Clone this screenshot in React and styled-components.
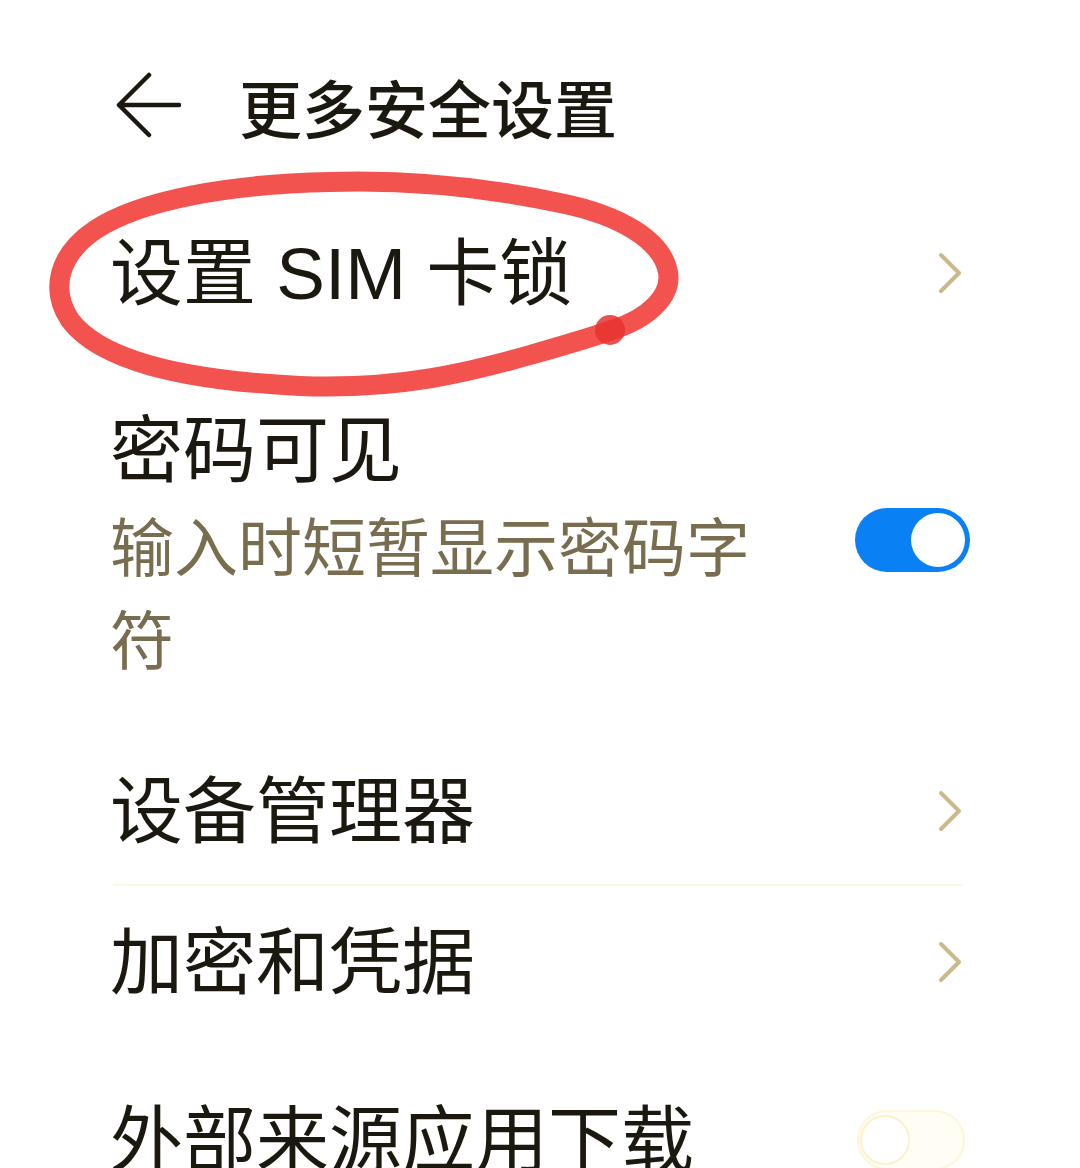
import React from 'react'
import styled, { createGlobalStyle } from 'styled-components'

const Global = createGlobalStyle`
  html, body {
    margin: 0;
    padding: 0;
    background: #fff;
  }
  body {
    font-family: "Noto Sans CJK SC", "Noto Sans", sans-serif;
    color: #1b1810;
  }
`

const Screen = styled.div`
  position: relative;
  width: 1080px;
  height: 1168px;
  overflow: hidden;
  background: #fff;
`

const Header = styled.header`
  display: flex;
  align-items: center;
  height: 210px;
  padding-left: 115px;
  gap: 58px;
`

const Title = styled.h1`
  margin: 0;
  font-size: 63px;
  font-weight: 500;
  line-height: 1;
  color: #1b1810;
`

const List = styled.div`
  display: flex;
  flex-direction: column;
  padding: 5px 110px 0 110px;
`

const Row = styled.div`
  display: flex;
  align-items: center;
  justify-content: space-between;
  height: ${p => p.h}px;
`

const TallRow = styled.div`
  display: flex;
  align-items: center;
  justify-content: space-between;
  padding: 73px 0 55px;
`

const TextBlock = styled.div`
  display: flex;
  flex-direction: column;
  max-width: 680px;
`

// Latin glyphs (SIM) come from Liberation Sans, CJK falls back to Noto
const Label = styled.div`
  font-family: "Liberation Sans", "Noto Sans CJK SC", sans-serif;
  font-size: 73px;
  line-height: 93px;
  font-weight: 400;
  color: #1b1810;
  white-space: nowrap;
`

const Sub = styled.div`
  font-size: 64px;
  line-height: 93px;
  color: #786e4f;
`

const Divider = styled.div`
  height: 2px;
  background: #fbf8e2;
  margin: 0 8px 0 3px;
`

const Chevron = styled.svg`
  width: 26px;
  height: 44px;
  margin-right: 7px;
  flex-shrink: 0;
`

const Toggle = styled.div`
  display: flex;
  align-items: center;
  justify-content: ${p => (p.on ? 'flex-end' : 'flex-start')};
  box-sizing: border-box;
  width: ${p => (p.on ? 115 : 108)}px;
  height: ${p => (p.on ? 64 : 60)}px;
  padding: 0 5px;
  border-radius: 32px;
  margin-top: ${p => p.offset || 0}px;
  margin-right: ${p => (p.on ? 0 : 5)}px;
  background: ${p => (p.on ? '#0a80f5' : '#fffdf4')};
  border: ${p => (p.on ? 'none' : '2px solid #fcf6da')};
  flex-shrink: 0;
`

const Knob = styled.div`
  width: ${p => (p.on ? 54 : 50)}px;
  height: ${p => (p.on ? 54 : 50)}px;
  border-radius: 50%;
  background: #fff;
  box-sizing: border-box;
  border: ${p => (p.on ? 'none' : '2px solid #fbf2cc')};
  margin-left: ${p => (p.on ? 0 : -4)}px;
`

const Mark = styled.svg`
  position: absolute;
  top: 0;
  left: 0;
  width: 1080px;
  height: 1168px;
  pointer-events: none;
`

const BackArrow = () => (
  <svg width="66" height="66" viewBox="0 0 66 66" fill="none">
    <path d="M4 33H64M34 3L4 33L34 63" stroke="#1b1810" strokeWidth="4.5" strokeLinecap="round" strokeLinejoin="round" />
  </svg>
)

const Arrow = () => (
  <Chevron viewBox="0 0 26 44" fill="none">
    <path d="M4 4L22 22L4 40" stroke="#c9b98c" strokeWidth="4" strokeLinecap="round" strokeLinejoin="round" />
  </Chevron>
)

export default function App() {
  return (
    <>
      <Global />
      <Screen>
        <Header>
          <BackArrow />
          <Title>更多安全设置</Title>
        </Header>
        <List>
          <Row h={116}>
            <Label>设置 SIM 卡锁</Label>
            <Arrow />
          </Row>
          <TallRow>
            <TextBlock>
              <Label>密码可见</Label>
              <Sub>输入时短暂显示密码字符</Sub>
            </TextBlock>
            <Toggle on offset={-8}>
              <Knob on />
            </Toggle>
          </TallRow>
          <Row h={146}>
            <Label>设备管理器</Label>
            <Arrow />
          </Row>
          <Divider />
          <Row h={152}>
            <Label>加密和凭据</Label>
            <Arrow />
          </Row>
          <Row h={204}>
            <Label>外部来源应用下载</Label>
            <Toggle>
              <Knob />
            </Toggle>
          </Row>
        </List>
        <Mark viewBox="0 0 1080 1168" fill="none">
          <path
            d="M612 330 C650 318 672 295 668 272 C662 240 620 215 560 203 C480 186 400 180 330 182 C230 184 140 200 95 230 C58 255 50 290 70 320 C100 360 180 380 300 386 C400 390 470 372 530 355 C565 345 590 338 612 330 Z"
            stroke="#f1443f"
            strokeOpacity="0.92"
            strokeWidth="20"
            strokeLinejoin="round"
          />
          <circle cx="610" cy="330" r="15" fill="#e8332f" fillOpacity="0.85" />
        </Mark>
      </Screen>
    </>
  )
}
